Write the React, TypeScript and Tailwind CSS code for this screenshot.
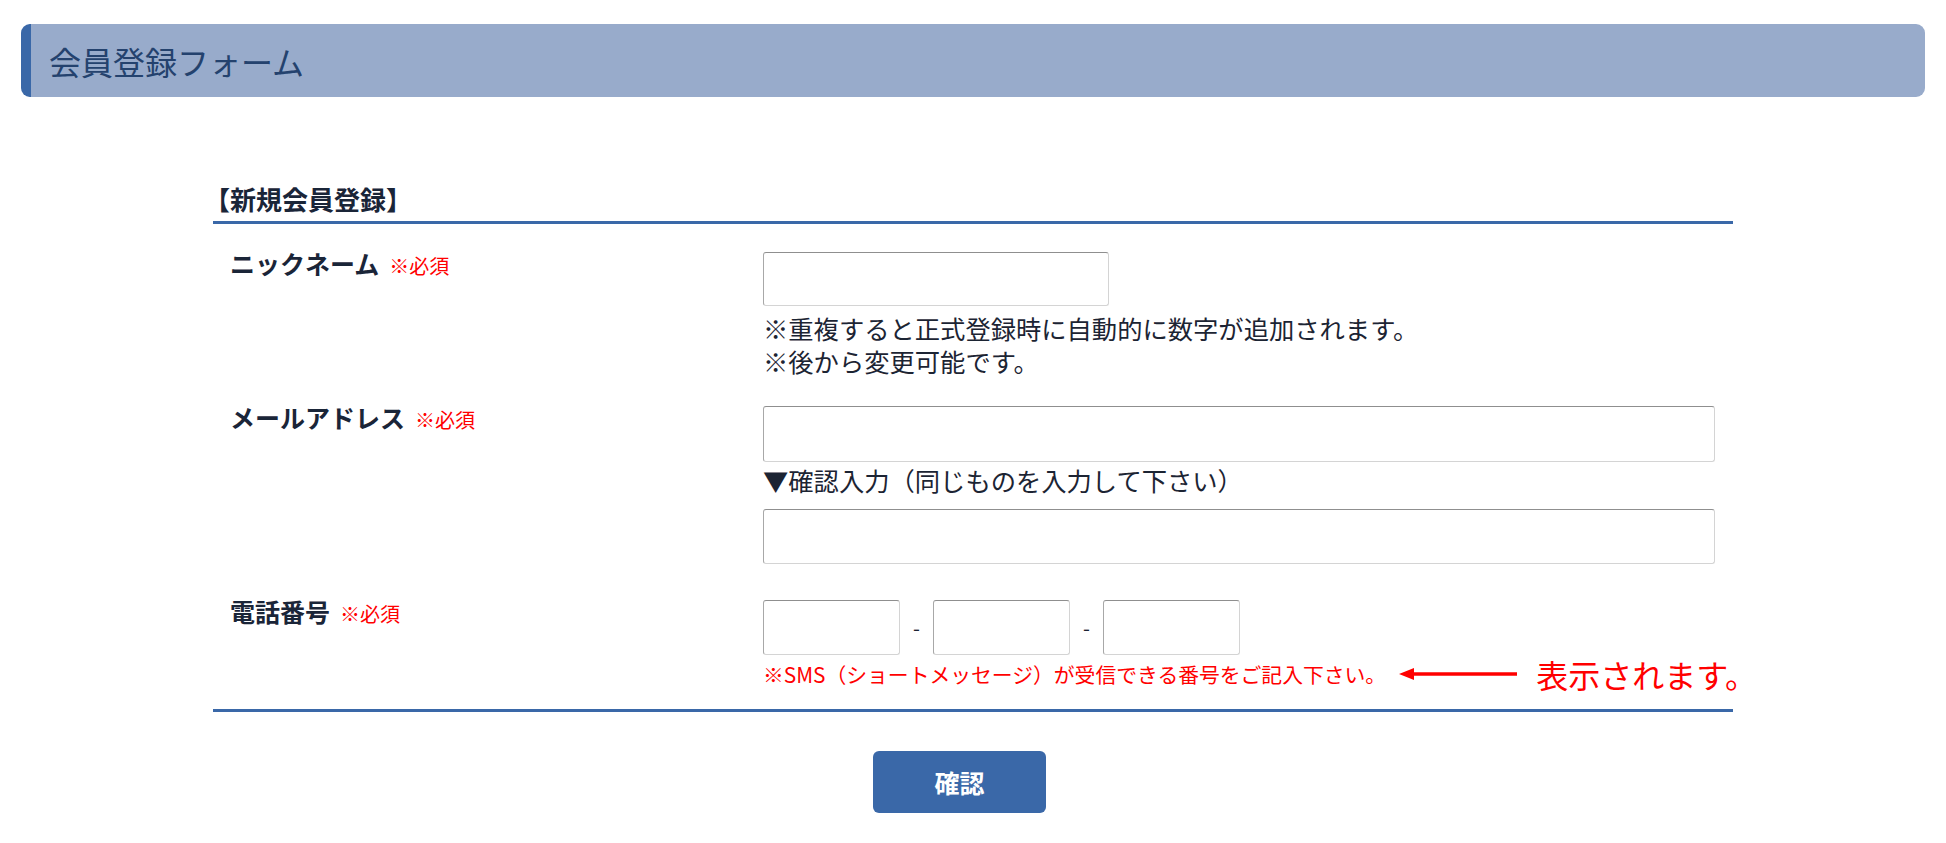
import React from "react";

const font = { fontFamily: '"Noto Sans CJK JP", "Noto Sans", sans-serif' };

function TextInput({ className }: { className: string }) {
  return (
    <input
      type="text"
      className={
        "block bg-white rounded-[3px] border border-[#d4d4d4] border-t-[#8f8f8f] border-l-[#a8a8a8] outline-none " +
        className
      }
    />
  );
}

function Label({ text }: { text: string }) {
  return (
    <div className="w-[550px] shrink-0 pl-[17px] flex items-baseline leading-[22px]">
      <span className="text-[25px] font-bold text-[#1a2538]">{text}</span>
      <span className="ml-[10px] text-[20px] text-[#ff0000]">※必須</span>
    </div>
  );
}

export default function App() {
  return (
    <div className="min-h-screen bg-white pb-[30px]" style={font}>
      <div className="px-[21px] pt-[24px]">
        <div className="h-[73px] rounded-[9px] bg-[#98abcb] border-l-[10px] border-[#3a68a8] flex items-center pl-[18px]">
          <h1 className="text-[32px] font-normal text-[#24426e] leading-none">
            会員登録フォーム
          </h1>
        </div>
      </div>

      <main className="w-[1520px] mx-auto mt-[84px]">
        <h2 className="text-[26px] font-bold text-[#1a2538] leading-[36px] ml-[-9px] pb-[4px]">
          【新規会員登録】
        </h2>
        <div className="border-t-[3px] border-[#3a68a8]">
          {/* nickname */}
          <div className="flex pt-[28px]">
            <Label text="ニックネーム" />
            <div className="text-[25.3px] leading-[33px] text-[#1c2433]">
              <TextInput className="w-[346px] h-[54px]" />
              <p className="mt-[6px]">※重複すると正式登録時に自動的に数字が追加されます。</p>
              <p>※後から変更可能です。</p>
            </div>
          </div>

          {/* mail */}
          <div className="flex pt-[28px]">
            <Label text="メールアドレス" />
            <div className="text-[25.3px] leading-[33px] text-[#1c2433]">
              <TextInput className="w-[952px] h-[56px]" />
              <p className="mt-[2px]">▼確認入力（同じものを入力して下さい）</p>
              <TextInput className="w-[952px] h-[55px] mt-[12px]" />
            </div>
          </div>

          {/* tel */}
          <div className="flex pt-[36px] pb-[17px]">
            <Label text="電話番号" />
            <div className="min-w-0">
              <div className="flex items-center">
                <TextInput className="w-[137px] h-[55px]" />
                <span className="w-[33px] text-center text-[20px] text-[#1c2433]">-</span>
                <TextInput className="w-[137px] h-[55px]" />
                <span className="w-[33px] text-center text-[20px] text-[#1c2433]">-</span>
                <TextInput className="w-[137px] h-[55px]" />
              </div>
              <div className="flex items-center mt-[1px] whitespace-nowrap">
                <span className="shrink-0 text-[20.8px] leading-[30px] text-[#ff0000]">
                  ※SMS（ショートメッセージ）が受信できる番号をご記入下さい。
                </span>
                <svg width="118" height="14" viewBox="0 0 118 14" className="ml-[13px] shrink-0">
                  <line x1="12" y1="7" x2="118" y2="7" stroke="#ff0000" strokeWidth="3.5" />
                  <polygon points="0,7 15,1 15,13" fill="#ff0000" />
                </svg>
                <span className="shrink-0 ml-[19px] text-[32px] leading-[36px] text-[#ff0000]">表示されます。</span>
              </div>
            </div>
          </div>
        </div>
        <div className="border-t-[3px] border-[#3a68a8]" />

        <div className="flex justify-center mt-[39px] pr-[27px]">
          <button className="w-[173px] h-[62px] rounded-[6px] bg-[#3a68a8] text-white text-[25px] font-bold leading-none">
            確認
          </button>
        </div>
      </main>
    </div>
  );
}
